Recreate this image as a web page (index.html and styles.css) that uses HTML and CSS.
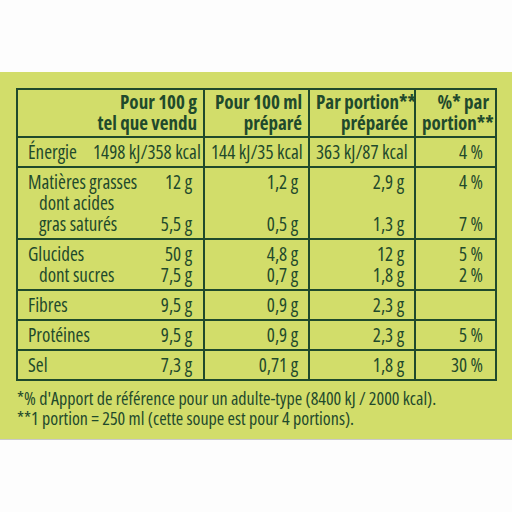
FILE: index.html
```html
<!DOCTYPE html>
<html lang="fr">

<head>
  <meta charset="UTF-8">
  <meta name="viewport" content="width=device-width, initial-scale=1.0">
  <title>Valeurs nutritionnelles</title>
  <link rel="stylesheet" href="styles.css">
</head>

<body>
  <div class="panel">
    <table class="nutri">
      <colgroup>
        <col class="c-label">
        <col class="c-val">
        <col class="c-prep">
        <col class="c-port">
        <col class="c-pct">
      </colgroup>
      <tr class="head">
        <th colspan="2">Pour 100 g<br>tel que vendu</th>
        <th>Pour 100 ml<br>préparé</th>
        <th>Par portion**<br>préparée</th>
        <th>%* par<br>portion**</th>
      </tr>
      <tr>
        <td class="label">Énergie</td>
        <td class="val">1498 kJ/358 kcal</td>
        <td>144 kJ/35 kcal</td>
        <td>363 kJ/87 kcal</td>
        <td class="pct">4 %</td>
      </tr>
      <tr>
        <td class="label">Matières grasses<br><span class="sub">dont acides</span><br><span class="sub">gras saturés</span></td>
        <td class="val">12 g<br><br>5,5 g</td>
        <td>1,2 g<br><br>0,5 g</td>
        <td>2,9 g<br><br>1,3 g</td>
        <td class="pct">4 %<br><br>7 %</td>
      </tr>
      <tr>
        <td class="label">Glucides<br><span class="sub">dont sucres</span></td>
        <td class="val">50 g<br>7,5 g</td>
        <td>4,8 g<br>0,7 g</td>
        <td>12 g<br>1,8 g</td>
        <td class="pct">5 %<br>2 %</td>
      </tr>
      <tr>
        <td class="label">Fibres</td>
        <td class="val">9,5 g</td>
        <td>0,9 g</td>
        <td>2,3 g</td>
        <td class="pct"></td>
      </tr>
      <tr>
        <td class="label">Protéines</td>
        <td class="val">9,5 g</td>
        <td>0,9 g</td>
        <td>2,3 g</td>
        <td class="pct">5 %</td>
      </tr>
      <tr>
        <td class="label">Sel</td>
        <td class="val">7,3 g</td>
        <td>0,71 g</td>
        <td>1,8 g</td>
        <td class="pct">30 %</td>
      </tr>
    </table>
    <p class="note">*% d'Apport de référence pour un adulte-type (8400 kJ / 2000 kcal).<br>**1 portion = 250 ml (cette soupe est pour 4 portions).</p>
  </div>
</body>

</html>
```

FILE: styles.css
```css
body {
  margin: 0;
  background: #fdfdfd;
  font-family: "Open Sans", sans-serif;
  font-stretch: 75%;
  color: #1f4a2c;
}
.panel {
  margin-top: 72px;
  height: 368px;
  box-sizing: border-box;
  padding: 16px 17px 0 16px;
  background: #d2dd6a;
  border-bottom: 1px solid #c9c9c9;
}
.nutri {
  width: 479px;
  border-collapse: collapse;
  table-layout: fixed;
  font-size: 19px;
}
.c-label {
  width: 70px;
}
.c-val {
  width: 117px;
}
.c-prep {
  width: 105px;
}
.c-port {
  width: 106px;
}
.c-pct {
  width: 81px;
}
.nutri th,
.nutri td {
  border: 2px solid #1f4a2c;
  padding: 4px 10px 3px 6px;
  line-height: 21px;
  text-align: right;
  vertical-align: top;
  white-space: nowrap;
}
.nutri th {
  padding: 2px 6px 2px 6px;
}
.nutri td.label {
  text-align: left;
  padding-left: 10px;
  border-right: none;
}
.nutri td.val {
  border-left: none;
  padding-right: 11px;
}
.nutri td.pct {
  padding-right: 12px;
}
.sub {
  padding-left: 11px;
}
.note {
  margin: 7px 0 0 1px;
  font-size: 18px;
  line-height: 20px;
}
```
